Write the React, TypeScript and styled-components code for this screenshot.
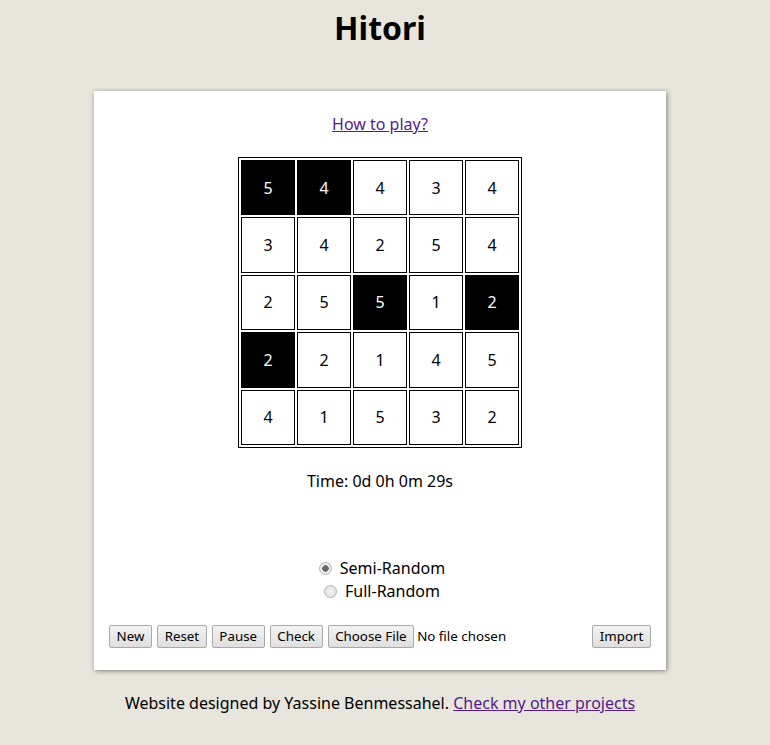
import React from 'react';
import styled, { createGlobalStyle } from 'styled-components';

const GlobalStyle = createGlobalStyle`
  body {
    margin: 0;
    background: #e8e6dc;
    font-family: "Noto Sans", "Open Sans", sans-serif;
    color: #000;
  }
`;

const Page = styled.div`
  width: 760px;
  display: flex;
  flex-direction: column;
  align-items: center;
`;

const Title = styled.h1`
  margin: 8px 0 0;
  font-size: 32px;
  font-weight: bold;
  line-height: 40px;
`;

const Card = styled.div`
  margin-top: 43px;
  width: 572px;
  background: #fff;
  box-shadow: 1px 1px 5px rgba(0, 0, 0, 0.45);
  padding: 22px 15px 22px;
  box-sizing: border-box;
  display: flex;
  flex-direction: column;
  align-items: center;
`;

const Link = styled.a`
  color: #551a8b;
  text-decoration: underline;
  font-size: 16px;
  line-height: 22px;
  cursor: pointer;
`;

const Board = styled.table`
  margin-top: 22px;
  border: 1px solid #000;
  border-spacing: 2px;
`;

const Cell = styled.td<{ $black: boolean }>`
  width: 52px;
  height: 53.4px;
  padding: 0;
  border: 1px solid #000;
  text-align: center;
  font-size: 16px;
  background: ${p => (p.$black ? '#000' : '#fff')};
  color: ${p => (p.$black ? '#fff' : '#000')};
`;

const Timer = styled.div`
  margin-top: 22px;
  font-size: 16px;
  line-height: 22px;
`;

const Modes = styled.div`
  margin-top: 65px;
  padding-left: 4px;
  display: flex;
  flex-direction: column;
  align-items: center;
  font-size: 16px;
  line-height: 23px;
`;

const ModeLabel = styled.label`
  display: flex;
  align-items: center;
  gap: 8px;
`;

const Radio = styled.span<{ $on: boolean }>`
  width: 13px;
  height: 13px;
  border-radius: 50%;
  border: 1px solid #b4b4b4;
  background: ${p =>
    p.$on
      ? 'radial-gradient(circle, #6a6a6a 0 3px, #f2f2f2 3.5px, #dedede 100%)'
      : 'radial-gradient(circle, #f4f4f4 0, #dcdcdc 100%)'};
  box-sizing: border-box;
`;

const Toolbar = styled.div`
  margin-top: 22px;
  align-self: stretch;
  display: flex;
  align-items: center;
  gap: 5px;
`;

const Button = styled.button`
  height: 23px;
  padding: 0 6.6px;
  font-family: "Noto Sans", sans-serif;
  font-size: 13.33px;
  color: #000;
  border: 1px solid #a9a9a9;
  border-radius: 2px;
  background: linear-gradient(#f3f3f3, #dfdfdf);
`;

const FileName = styled.span`
  font-size: 13.33px;
  margin-left: -2px;
  flex: 1;
`;

const Footer = styled.div`
  margin-top: 22px;
  font-size: 16px;
  line-height: 22px;
`;

const grid = [
  [5, 4, 4, 3, 4],
  [3, 4, 2, 5, 4],
  [2, 5, 5, 1, 2],
  [2, 2, 1, 4, 5],
  [4, 1, 5, 3, 2],
];

const blacks = ['0-0', '0-1', '2-2', '2-4', '3-0'];

const App: React.FC = () => {
  return (
    <Page>
      <GlobalStyle />
      <Title>Hitori</Title>
      <Card>
        <Link>How to play?</Link>
        <Board>
          <tbody>
            {grid.map((row, r) => (
              <tr key={r}>
                {row.map((n, c) => (
                  <Cell key={c} $black={blacks.includes(`${r}-${c}`)}>{n}</Cell>
                ))}
              </tr>
            ))}
          </tbody>
        </Board>
        <Timer>Time: 0d 0h 0m 29s</Timer>
        <Modes>
          <ModeLabel><Radio $on={true} />Semi-Random</ModeLabel>
          <ModeLabel><Radio $on={false} />Full-Random</ModeLabel>
        </Modes>
        <Toolbar>
          <Button>New</Button>
          <Button>Reset</Button>
          <Button>Pause</Button>
          <Button>Check</Button>
          <Button>Choose File</Button>
          <FileName>No file chosen</FileName>
          <Button>Import</Button>
        </Toolbar>
      </Card>
      <Footer>
        Website designed by Yassine Benmessahel. <Link>Check my other projects</Link>
      </Footer>
    </Page>
  );
};

export default App;
